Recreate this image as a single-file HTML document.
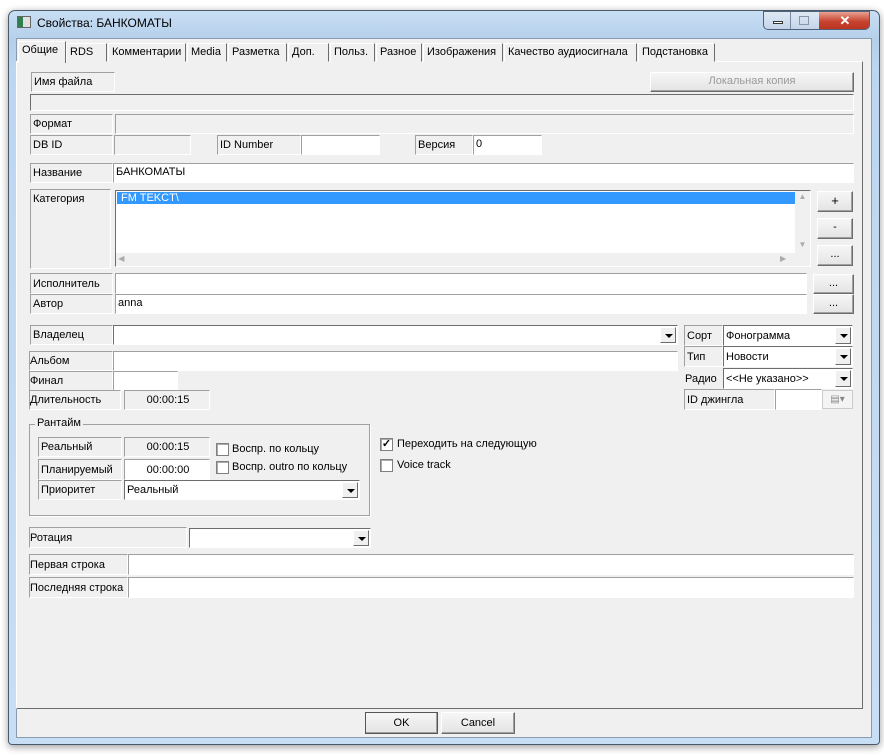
<!DOCTYPE html>
<html><head><meta charset="utf-8"><style>
*{box-sizing:border-box;margin:0;padding:0}
body{width:884px;height:755px;background:#fff;position:relative;overflow:hidden;font-family:"Liberation Sans",sans-serif;font-size:11px;color:#000}
.a{position:absolute}
.win{left:8px;top:10px;width:872px;height:735px;border:1px solid #4a5a6a;border-radius:7px 7px 4px 4px;background:linear-gradient(180deg,#c8def4 0,#b4cfea 30px,#bdd6ef 60px,#c8def4 100%);box-shadow:0 2px 8px rgba(0,0,0,.4)}
.client{left:16px;top:38px;width:856px;height:700px;background:#f0f0f0;border:1px solid #8a9bb0}
.lbl{position:absolute;background:#f0f0f0;border:1px solid;border-color:#a0a0a0 #fff #fff #a0a0a0;padding:0 0 0 2px;white-space:nowrap;overflow:hidden;display:flex;align-items:center}
.f{position:absolute;background:#fff;border:1px solid;border-color:#a0a0a0 #fff #fff #a0a0a0;padding:2px 0 0 2px;line-height:12px}
.fc{display:flex;align-items:center;padding-top:0}
.g{background:#f0f0f0}
.btn{position:absolute;background:linear-gradient(#f6f6f6,#e4e4e4);border:1px solid;border-color:#fff #6d6d6d #6d6d6d #fff;box-shadow:inset -1px -1px 0 #a0a0a0;text-align:center;line-height:17px}
.tab{position:absolute;top:43px;height:19px;border:1px solid;border-color:#fff #6d6d6d transparent #fff;line-height:16px;padding-left:3px;white-space:nowrap;background:#f0f0f0}
.dd{position:absolute;right:1px;top:1px;width:16px;bottom:1px;background:#f0f0f0;border:1px solid;border-color:#fff #6d6d6d #6d6d6d #fff}
.dd:after{content:"";position:absolute;left:4px;top:6px;border-left:4px solid transparent;border-right:4px solid transparent;border-top:4px solid #000}
.cb{position:absolute;width:13px;height:13px;background:#fff;border:1px solid #808080;box-shadow:inset 1px 1px 0 #aaa}
</style></head><body>
<div class="a win"></div>
<div class="a" style="left:17px;top:16px;width:14px;height:12px;background:linear-gradient(90deg,#2f7f4f 0 40%,#e0e0e0 40%);border:1px solid #666"></div>
<div class="a" style="left:37px;top:16px;font-size:12px">Свойства: БАНКОМАТЫ</div>
<div class="a" style="left:763px;top:11px;width:107px;height:19px;border:1px solid #50627a;border-radius:0 0 5px 5px;background:linear-gradient(#dfe9f5,#c4d4e8);overflow:hidden">
 <div class="a" style="left:9px;top:9px;width:10px;height:3px;border:1px solid #333;background:#fff"></div>
 <div class="a" style="left:26px;top:0;width:1px;height:19px;background:#7a8ca4"></div>
 <div class="a" style="left:35px;top:4px;width:10px;height:9px;border:1px solid #8894a8"></div>
 <div class="a" style="left:55px;top:0;width:52px;height:19px;background:linear-gradient(#e8a090,#c7432f 50%,#b8301c);color:#fff;text-align:center;font-weight:bold;font-size:13px;line-height:17px">✕</div>
</div>
<div class="a client"></div>
<div class="a" style="left:16px;top:61px;width:847px;height:648px;border:1px solid;border-color:#fff #6d6d6d #6d6d6d #fff"></div>
<div class="tab" style="left:18px;top:41px;height:22px;width:48px;border-bottom:none;z-index:2">Общие</div>
<div class="tab" style="left:66px;width:41px">RDS</div>
<div class="tab" style="left:108px;width:78px">Комментарии</div>
<div class="tab" style="left:187px;width:40px">Media</div>
<div class="tab" style="left:228px;width:59px">Разметка</div>
<div class="tab" style="left:288px;width:41px">Доп.</div>
<div class="tab" style="left:330px;width:45px">Польз.</div>
<div class="tab" style="left:376px;width:46px">Разное</div>
<div class="tab" style="left:423px;width:80px">Изображения</div>
<div class="tab" style="left:504px;width:133px">Качество аудиосигнала</div>
<div class="tab" style="left:638px;width:77px">Подстановка</div>

<div class="lbl" style="left:31px;top:72px;width:84px;height:20px">Имя файла</div>
<div class="btn" style="left:650px;top:72px;width:204px;height:20px;color:#9a9a9a">Локальная копия</div>
<div class="f g" style="left:30px;top:94px;width:824px;height:17px;border-color:#6d6d6d #fff #fff #6d6d6d"></div>
<div class="lbl" style="left:30px;top:114px;width:83px;height:20px">Формат</div>
<div class="f g" style="left:115px;top:114px;width:739px;height:20px"></div>
<div class="lbl" style="left:30px;top:135px;width:83px;height:20px">DB ID</div>
<div class="f g" style="left:114px;top:135px;width:77px;height:20px"></div>
<div class="lbl" style="left:217px;top:135px;width:84px;height:20px">ID Number</div>
<div class="f" style="left:301px;top:135px;width:79px;height:20px"></div>
<div class="lbl" style="left:415px;top:135px;width:58px;height:20px">Версия</div>
<div class="f" style="left:473px;top:135px;width:69px;height:20px">0</div>
<div class="lbl" style="left:30px;top:163px;width:83px;height:20px">Название</div>
<div class="f" style="left:113px;top:163px;width:741px;height:20px">БАНКОМАТЫ</div>
<div class="lbl" style="left:30px;top:189px;width:81px;height:80px;align-items:flex-start;padding-top:3px">Категория</div>
<div class="f" style="left:115px;top:190px;width:696px;height:77px;padding:0;border-color:#6d6d6d #fff #fff #6d6d6d">
 <div class="a" style="left:1px;top:1px;width:678px;height:12px;background:#3399ff;color:#fff;line-height:12px;padding-left:4px">FM TEKCT\</div>
 <div class="a" style="left:679px;top:0;width:15px;height:62px;background:#f0f0f0;color:#aaa;font-size:8px;text-align:center">▲<br><br><br><br>▼</div>
 <div class="a" style="left:0;top:62px;width:694px;height:13px;background:#f0f0f0;color:#aaa;font-size:8px">&nbsp;◀<span style="position:absolute;left:664px">▶</span></div>
</div>
<div class="btn" style="left:817px;top:191px;width:36px;height:21px;font-size:13px">+</div>
<div class="btn" style="left:817px;top:218px;width:36px;height:21px">-</div>
<div class="btn" style="left:817px;top:245px;width:36px;height:21px">...</div>
<div class="lbl" style="left:30px;top:273px;width:83px;height:21px">Исполнитель</div>
<div class="f" style="left:115px;top:273px;width:692px;height:21px"></div>
<div class="btn" style="left:813px;top:274px;width:41px;height:20px">...</div>
<div class="lbl" style="left:30px;top:294px;width:83px;height:20px">Автор</div>
<div class="f" style="left:115px;top:294px;width:692px;height:20px">anna</div>
<div class="btn" style="left:813px;top:294px;width:41px;height:20px">...</div>

<div class="lbl" style="left:30px;top:325px;width:83px;height:20px">Владелец</div>
<div class="f" style="left:113px;top:325px;width:565px;height:20px;border-color:#6d6d6d #fff #fff #6d6d6d"><div class="dd"></div></div>
<div class="lbl" style="left:29px;top:351px;width:84px;height:20px;padding:0">Альбом</div>
<div class="f" style="left:113px;top:351px;width:565px;height:20px"></div>
<div class="lbl" style="left:29px;top:371px;width:84px;height:20px;padding:0">Финал</div>
<div class="f" style="left:113px;top:371px;width:65px;height:20px"></div>
<div class="lbl" style="left:29px;top:390px;width:92px;height:20px;padding:0">Длительность</div>
<div class="f g fc" style="left:124px;top:390px;width:86px;height:20px;justify-content:center">00:00:15</div>

<div class="lbl" style="left:684px;top:325px;width:39px;height:21px">Сорт</div>
<div class="f fc" style="left:723px;top:325px;width:130px;height:21px;border-color:#6d6d6d #fff #fff #6d6d6d">Фонограмма<div class="dd"></div></div>
<div class="lbl" style="left:684px;top:346px;width:39px;height:21px">Тип</div>
<div class="f fc" style="left:723px;top:346px;width:130px;height:21px;border-color:#6d6d6d #fff #fff #6d6d6d">Новости<div class="dd"></div></div>
<div class="lbl" style="left:684px;top:368px;width:39px;height:21px;padding:0;border-color:transparent">Радио</div>
<div class="f fc" style="left:723px;top:368px;width:130px;height:21px;border-color:#6d6d6d #fff #fff #6d6d6d">&lt;&lt;Не указано&gt;&gt;<div class="dd"></div></div>
<div class="lbl" style="left:684px;top:389px;width:91px;height:21px">ID джингла</div>
<div class="f" style="left:775px;top:389px;width:47px;height:21px"></div>
<div class="a" style="left:822px;top:390px;width:31px;height:19px;border:1px solid #ccc;background:#f4f4f4;color:#888;font-size:10px;line-height:17px;text-align:center">▤▾</div>

<div class="a" style="left:29px;top:424px;width:341px;height:92px;border:1px solid #a0a0a0;box-shadow:1px 1px 0 #fff"></div>
<div class="a" style="left:35px;top:417px;background:#f0f0f0;padding:0 2px">Рантайм</div>
<div class="lbl" style="left:38px;top:437px;width:84px;height:20px">Реальный</div>
<div class="f g fc" style="left:124px;top:437px;width:86px;height:20px;justify-content:center">00:00:15</div>
<div class="lbl" style="left:38px;top:459px;width:84px;height:21px">Планируемый</div>
<div class="f fc" style="left:124px;top:459px;width:86px;height:21px;justify-content:center">00:00:00</div>
<div class="lbl" style="left:38px;top:480px;width:84px;height:20px">Приоритет</div>
<div class="f fc" style="left:124px;top:480px;width:236px;height:20px;border-color:#6d6d6d #fff #fff #6d6d6d">Реальный<div class="dd"></div></div>
<div class="cb" style="left:216px;top:443px"></div><div class="a" style="left:232px;top:443px">Воспр. по кольцу</div>
<div class="cb" style="left:216px;top:461px"></div><div class="a" style="left:232px;top:461px">Воспр. outro по кольцу</div>
<div class="cb" style="left:380px;top:438px;font-size:11px;line-height:10px;text-align:center;font-weight:bold">✓</div><div class="a" style="left:397px;top:438px">Переходить на следующую</div>
<div class="cb" style="left:380px;top:459px"></div><div class="a" style="left:397px;top:459px">Voice track</div>

<div class="lbl" style="left:29px;top:527px;width:158px;height:21px;padding:0">Ротация</div>
<div class="f" style="left:189px;top:528px;width:182px;height:20px;border-color:#6d6d6d #fff #fff #6d6d6d"><div class="dd"></div></div>
<div class="lbl" style="left:29px;top:554px;width:99px;height:21px;padding:0">Первая строка</div>
<div class="f" style="left:128px;top:554px;width:726px;height:21px"></div>
<div class="lbl" style="left:29px;top:577px;width:99px;height:21px;padding:0">Последняя строка</div>
<div class="f" style="left:128px;top:577px;width:726px;height:21px"></div>

<div class="btn" style="left:365px;top:712px;width:73px;height:22px;border:1px solid #555;line-height:20px">OK</div>
<div class="btn" style="left:441px;top:712px;width:74px;height:22px;line-height:20px">Cancel</div>
</body></html>
